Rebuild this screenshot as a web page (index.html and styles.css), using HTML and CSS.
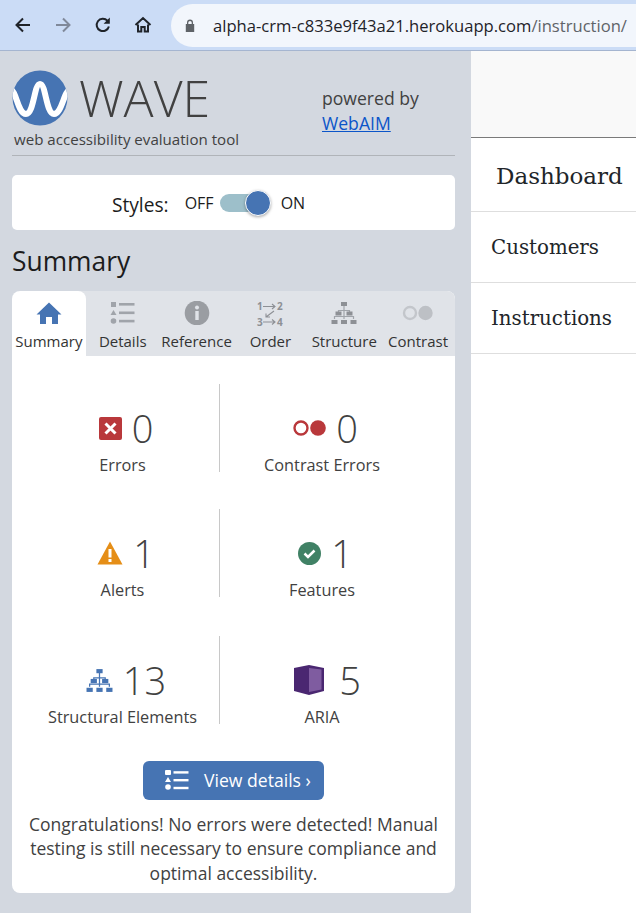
FILE: index.html
```html
<!DOCTYPE html>
<html>
<head>
  <meta charset="utf-8">
  <title>alpha-crm</title>
  <link rel="stylesheet" href="styles.css">
</head>
<body>
  <!-- browser toolbar -->
  <div class="toolbar">
    <div class="nav-icons">
      <svg class="nav-icon" viewBox="0 0 18 18"><path d="M16 9H3M9 2.5 2.5 9 9 15.5" fill="none" stroke="#1f2329" stroke-width="2"/></svg>
      <svg class="nav-icon" viewBox="0 0 18 18"><path d="M2 9h13M9 2.5 15.5 9 9 15.5" fill="none" stroke="#80899a" stroke-width="2"/></svg>
      <svg class="nav-icon" viewBox="0 0 18 18"><path d="M14.9 10.5A6.2 6.2 0 1 1 13.4 4.6" fill="none" stroke="#1f2329" stroke-width="2"/><path d="M15.8 1.5v6.2H9.6z" fill="#1f2329"/></svg>
      <svg class="nav-icon" viewBox="0 0 18 18"><path d="M4 8.5V15.5H7.3V11H10.7V15.5H14V8.5M1.5 9 9 2l7.5 7" fill="none" stroke="#1f2329" stroke-width="2"/></svg>
    </div>
    <div class="address">
      <svg class="lock" viewBox="0 0 10 13"><path d="M2 5V3.6a3 3 0 0 1 6 0V5h1.2v8H.8V5zM3.3 5h3.4V3.6a1.7 1.7 0 0 0-3.4 0z" fill="#5f6368"/></svg>
      <span class="host">alpha-crm-c833e9f43a21.herokuapp.com</span><span class="path">/instruction/</span>
    </div>
  </div>

  <div class="main">
    <div class="wave-panel">
      <div class="wave-head">
        <div class="brand">
          <div class="logo-row">
            <svg class="logo" viewBox="0 0 56 56">
              <defs><clipPath id="disc"><ellipse cx="28" cy="28" rx="27.5" ry="27.5"/></clipPath></defs>
              <circle cx="28" cy="28" r="27.5" fill="#4674b3"/>
              <path clip-path="url(#disc)" d="M-1 20C4 20 6 44 14 44S22 14 28 14 34 44 42 44 52 20 58 20" fill="none" stroke="#fff" stroke-width="6"/>
            </svg>
            <span class="wordmark">WAVE</span>
          </div>
          <div class="tagline">web accessibility evaluation tool</div>
        </div>
        <div class="powered">powered by<br><a href="#">WebAIM</a></div>
      </div>

      <div class="styles-box">
        <span class="styles-label">Styles:</span>
        <span class="styles-state">OFF</span>
        <span class="switch"><span class="knob"></span></span>
        <span class="styles-state">ON</span>
      </div>

      <h2 class="panel-title">Summary</h2>

      <div class="card">
        <div class="tabs">
          <div class="tab active">
            <svg class="tab-icon" viewBox="0 0 26 24"><path d="M13 1.5 25.5 13.5H22V23H16V16H10V23H4V13.5H.5z" fill="#4674b3"/></svg>
            Summary
          </div>
          <div class="tab">
            <svg class="tab-icon" viewBox="0 0 26 24"><g fill="#a0a4aa"><rect x="1" y="1" width="5" height="5"/><path d="M3.500 9 6.500 14H.5z"/><circle cx="3.500" cy="20" r="2.800"/><rect x="9" y="2" width="15.500" height="2.600"/><rect x="9" y="10.500" width="15.500" height="2.600"/><rect x="9" y="18.800" width="15.500" height="2.600"/></g></svg>
            Details
          </div>
          <div class="tab">
            <svg class="tab-icon" viewBox="0 0 26 24"><circle cx="13" cy="12" r="12.300" fill="#9a9da2"/><rect x="11.300" y="10" width="3.400" height="9" fill="#e0e3e8"/><circle cx="13" cy="6.500" r="2" fill="#e0e3e8"/></svg>
            Reference
          </div>
          <div class="tab">
            <svg class="tab-icon order-icon" viewBox="-1 -2 28 30">
              <g class="order-digits"><text x="0" y="9">1</text><text x="20" y="9">2</text><text x="0" y="25">3</text><text x="20" y="25">4</text></g>
              <path d="M6 5.500h12M15 3l3 2.500-3 2.500M6 21h12M15 18.500l3 2.500-3 2.500M17 10 9 16M9 12.500V16h4" fill="none" stroke="#8d9095" stroke-width="1.100"/>
            </svg>
            Order
          </div>
          <div class="tab">
            <svg class="tab-icon" viewBox="0 0 26 24"><path d="M13 4v5M7.500 12V9.500H18.500V12M13 9.500V18M3.500 18V15.500H22.500V18" fill="none" stroke="#a0a4aa" stroke-width="1.200"/><g fill="#8d9095"><rect x="10" y="1" width="6" height="4"/><rect x="4.500" y="10.500" width="6" height="4"/><rect x="15.500" y="10.500" width="6" height="4"/><rect x="0.500" y="19" width="6" height="4"/><rect x="10" y="19" width="6" height="4"/><rect x="19.500" y="19" width="6" height="4"/></g></svg>
            Structure
          </div>
          <div class="tab">
            <svg class="tab-icon contrast-icon" viewBox="0 0 32 16"><circle cx="8" cy="8" r="6" fill="none" stroke="#c3c6cb" stroke-width="2.400"/><circle cx="23.500" cy="8" r="7.200" fill="#bdc0c5"/></svg>
            Contrast
          </div>
        </div>

        <div class="stats">
          <div class="stat">
            <div class="stat-top">
              <svg class="stat-icon" width="23" height="23" viewBox="0 0 23 23"><rect width="23" height="23" rx="2" fill="#b9383b"/><path d="M6.500 6.500 16.500 16.500M16.500 6.500 6.500 16.500" stroke="#fff" stroke-width="3"/></svg>
              <span class="stat-num">0</span>
            </div>
            <div class="stat-label">Errors</div>
          </div>
          <div class="stat">
            <div class="stat-top">
              <svg class="stat-icon" width="33" height="16" viewBox="0 0 33 16"><circle cx="8" cy="8" r="6.500" fill="none" stroke="#b9383b" stroke-width="2.400"/><circle cx="25" cy="8" r="7.800" fill="#b9383b"/></svg>
              <span class="stat-num">0</span>
            </div>
            <div class="stat-label">Contrast Errors</div>
          </div>
          <div class="stat">
            <div class="stat-top">
              <svg class="stat-icon" width="26" height="24" viewBox="0 0 26 24"><path d="M13 .5 25.500 23.500H.5z" fill="#e58e17"/><rect x="11.500" y="8" width="3" height="8.500" fill="#fff"/><rect x="11.500" y="18" width="3" height="3" fill="#fff"/></svg>
              <span class="stat-num">1</span>
            </div>
            <div class="stat-label">Alerts</div>
          </div>
          <div class="stat">
            <div class="stat-top">
              <svg class="stat-icon" width="23" height="23" viewBox="0 0 23 23"><circle cx="11.500" cy="11.500" r="11.500" fill="#408165"/><path d="M6.500 11.500 10 15 16.500 8.500" fill="none" stroke="#fff" stroke-width="2.500"/></svg>
              <span class="stat-num">1</span>
            </div>
            <div class="stat-label">Features</div>
          </div>
          <div class="stat">
            <div class="stat-top">
              <svg class="stat-icon" width="27" height="25" viewBox="0 0 26 24"><path d="M13 4v5M7.500 12V9.500H18.500V12M13 9.500V18M3.500 18V15.500H22.500V18" fill="none" stroke="#4674b3" stroke-width="1.200"/><g fill="#4674b3"><rect x="10" y="1" width="6" height="4"/><rect x="4.500" y="10.500" width="6" height="4"/><rect x="15.500" y="10.500" width="6" height="4"/><rect x="0.500" y="19" width="6" height="4"/><rect x="10" y="19" width="6" height="4"/><rect x="19.500" y="19" width="6" height="4"/></g></svg>
              <span class="stat-num">13</span>
            </div>
            <div class="stat-label">Structural Elements</div>
          </div>
          <div class="stat">
            <div class="stat-top aria-top">
              <svg class="stat-icon" width="30" height="30" viewBox="0 0 30 30"><path d="M0 3 15 0 30 3V26L15 30 0 26z" fill="#4a2771"/><path d="M15 3 27.500 4.500V24.500L15 27z" fill="#7f5ca0"/></svg>
              <span class="stat-num">5</span>
            </div>
            <div class="stat-label">ARIA</div>
          </div>
        </div>

        <div class="view-row">
          <a class="view-btn" href="#">
            <svg class="view-icon" viewBox="0 0 24 20"><g fill="#fff"><rect x="0" y="0" width="6" height="5" rx="1"/><path d="M3 7 6 12H0z"/><circle cx="3" cy="17" r="2.800"/><rect x="8.500" y="1.200" width="15" height="2.400"/><rect x="8.500" y="9" width="15" height="2.400"/><rect x="8.500" y="16.800" width="15" height="2.400"/></g></svg>
            View details ›
          </a>
        </div>
        <p class="congrats">Congratulations! No errors were detected! Manual testing is still necessary to ensure compliance and optimal accessibility.</p>
      </div>
    </div>

    <!-- the page under test -->
    <div class="site">
      <div class="site-top"></div>
      <div class="site-brand">Dashboard</div>
      <div class="site-link">Customers</div>
      <div class="site-link">Instructions</div>
    </div>
  </div>
</body>
</html>
```

FILE: styles.css
```css
* {
  box-sizing: border-box;
}

html, body {
  margin: 0;
  padding: 0;
  height: 100%;
  overflow: hidden;
}

body {
  display: flex;
  flex-direction: column;
  font-family: "Open Sans", sans-serif;
  color: #414141;
}

/* Browser toolbar */
.toolbar {
  display: flex;
  align-items: center;
  flex-shrink: 0;
  height: 51px;
  padding: 3px 0 3px 14px;
  background-color: #cbdcf6;
  border-bottom: 1px solid #a5b5d0;
  overflow: hidden;
}

.nav-icons {
  display: flex;
  gap: 22px;
  flex-shrink: 0;
}

.nav-icon {
  width: 18px;
  height: 18px;
}

.address {
  display: flex;
  align-items: center;
  flex-shrink: 0;
  width: 520px;
  height: 43px;
  margin-left: 19px;
  padding-left: 14px;
  background-color: #f2f6fc;
  border-radius: 22px 0 0 22px;
  font-size: 16.6px;
  white-space: nowrap;
}

.lock {
  width: 10px;
  height: 13px;
  margin-right: 18px;
  flex-shrink: 0;
}

.host {
  color: #1f2329;
}

.path {
  color: #5f6368;
}

.main {
  display: flex;
  flex: 1;
  min-height: 0;
}

/* WAVE panel */
.wave-panel {
  width: 471px;
  flex-shrink: 0;
  padding: 19px 16px 0 12px;
  background-color: #d3d8e0;
}

.wave-head {
  display: flex;
  height: 86px;
  border-bottom: 1px solid #b0b4b9;
}

.brand {
  width: 310px;
}

.logo-row {
  display: flex;
  align-items: center;
  height: 56px;
}

.logo {
  width: 56px;
  height: 56px;
  flex-shrink: 0;
}

.wordmark {
  margin-left: 11px;
  font-size: 50px;
  font-weight: 300;
  line-height: 56px;
  color: #414141;
}

.tagline {
  margin: 3px 0 0 2px;
  font-size: 15.1px;
  line-height: 20px;
  white-space: nowrap;
}

.powered {
  padding-top: 16px;
  font-size: 17.6px;
  line-height: 25px;
}

.powered a {
  color: #0b55c9;
}

.styles-box {
  display: flex;
  align-items: center;
  justify-content: center;
  height: 55px;
  margin-top: 19px;
  padding-right: 50px;
  background-color: #fff;
  border-radius: 5px;
  color: #1c1c1c;
}

.styles-label {
  margin: 3px 16px 0 0;
  font-size: 19.2px;
}

.styles-state {
  font-size: 16px;
}

.switch {
  position: relative;
  width: 50px;
  height: 18px;
  margin: 0 11px 0 6px;
  background-color: #9dbfca;
  border-radius: 9px;
}

.knob {
  position: absolute;
  right: -1px;
  top: -4px;
  width: 26px;
  height: 26px;
  background-color: #4674b3;
  border: 1px solid #fff;
  border-radius: 50%;
  box-shadow: 0 1px 3px rgba(0, 0, 0, 0.35);
}

.panel-title {
  margin: 13px 0 12px;
  font-size: 26.4px;
  font-weight: 400;
  line-height: 36px;
  color: #1c1c1c;
}

.card {
  height: 602px;
  background-color: #fff;
  border-radius: 8px;
  overflow: hidden;
}

.tabs {
  display: flex;
  height: 65px;
  background-color: #e0e3e8;
}

.tab {
  display: flex;
  flex-direction: column;
  align-items: center;
  justify-content: flex-end;
  flex: 1;
  padding-bottom: 5px;
  font-size: 15px;
  line-height: 20px;
  white-space: nowrap;
  color: #333;
}

.tab.active {
  background-color: #fff;
  border-radius: 8px 8px 0 0;
}

.tab-icon {
  width: 26px;
  height: 24px;
  margin-bottom: 6px;
}

.order-icon {
  width: 28px;
  height: 30px;
  margin-bottom: 2px;
}

.order-digits {
  font-size: 10px;
  font-weight: 700;
  fill: #8d9095;
}

.contrast-icon {
  width: 32px;
  height: 16px;
  margin-bottom: 10px;
}

/* Summary counts */
.stats {
  display: grid;
  grid-template-columns: 194px 204px;
  grid-template-rows: 88px 88px 90px;
  row-gap: 37px;
  margin: 28px 0 0 14px;
}

.stat {
  display: flex;
  flex-direction: column;
  align-items: center;
}

.stat:nth-child(odd) {
  border-right: 1px solid #c8c8c8;
}

.stat:nth-child(n+5) {
  margin-top: 2px;
}

.stat-top {
  display: flex;
  align-items: center;
  gap: 10px;
  height: 56px;
  margin-top: 19px;
  padding-left: 7px;
}

.aria-top {
  gap: 15px;
  padding-left: 11px;
}

.stat-num {
  font-size: 38px;
  font-weight: 300;
  line-height: 50px;
}

.stat-label {
  font-size: 16.3px;
  line-height: 22px;
  margin-top: 1px;
  white-space: nowrap;
}

.view-row {
  display: flex;
  justify-content: center;
  margin-top: 37px;
}

.view-btn {
  display: flex;
  align-items: center;
  width: 181px;
  height: 39px;
  padding: 0 0 1px 22px;
  background-color: #4674b3;
  border-radius: 6px;
  color: #fff;
  font-size: 17.6px;
  text-decoration: none;
}

.view-icon {
  width: 24px;
  height: 20px;
  margin-right: 15px;
}

.congrats {
  margin: 12px 8px 0;
  font-size: 17.5px;
  line-height: 24.4px;
  text-align: center;
}

/* Page under test */
.site {
  flex: 1;
  min-width: 0;
  background-color: #fff;
  font-family: "DejaVu Serif", serif;
  color: #212529;
}

.site-top {
  height: 87px;
  background-color: #f9f9f9;
  border-bottom: 1px solid #7a7a7a;
}

.site-brand {
  height: 74px;
  padding: 22px 0 0 25px;
  font-size: 23px;
  line-height: 32px;
  border-bottom: 1px solid #dedede;
}

.site-link {
  height: 71px;
  padding: 21px 0 0 20px;
  font-size: 19.8px;
  line-height: 30px;
  border-bottom: 1px solid #dedede;
}
```
